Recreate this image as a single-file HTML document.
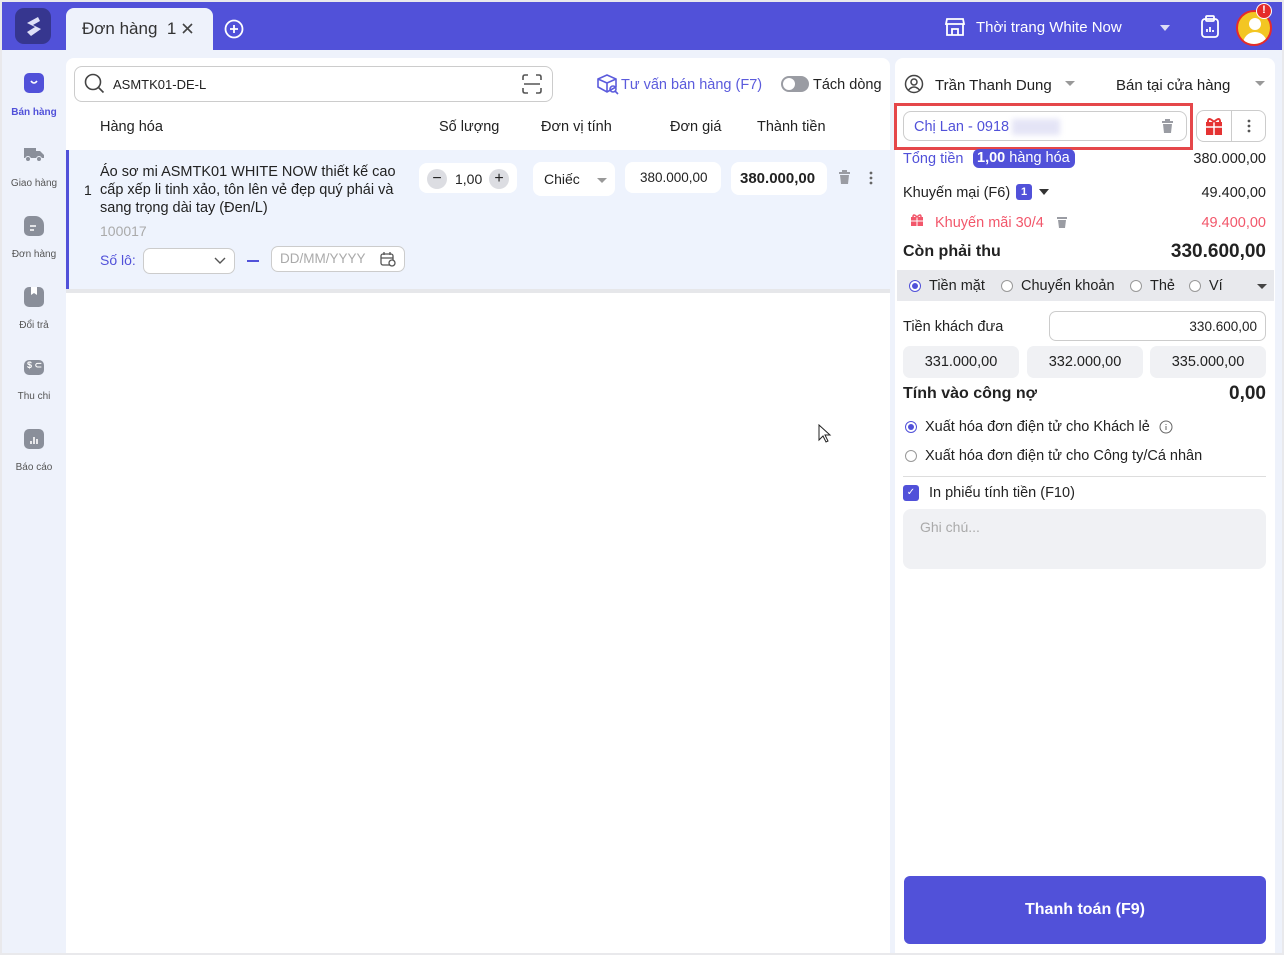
<!DOCTYPE html>
<html><head><meta charset="utf-8"><style>
*{box-sizing:border-box;margin:0;padding:0}
body{width:1284px;height:955px;overflow:hidden;background:#e9e9ec;font-family:"Liberation Sans",sans-serif;font-size:14px;color:#222;position:relative}
.abs{position:absolute}
#frame{left:2px;top:2px;width:1280px;height:951px;background:#eef2fb}
#top{left:2px;top:2px;width:1280px;height:48px;background:#5151d9}
.t{position:absolute;white-space:nowrap}
.r{position:absolute;white-space:nowrap;right:18px;text-align:right}
.side .lbl{position:absolute;width:64px;text-align:center;font-size:10px;color:#555}
.ic{position:absolute;left:24px;width:20px;height:20px;border-radius:5px;background:#8a8f9a}
.box{position:absolute;background:#fff;border-radius:8px}
.radio{position:absolute;width:12px;height:12px;border:1px solid #999;border-radius:50%;background:#fff}
.radio.on{border-color:#5151d9}
.radio.on:after{content:"";position:absolute;left:2px;top:2px;width:6px;height:6px;border-radius:50%;background:#5151d9}
</style></head><body>
<div id="frame" class="abs"></div>
<div id="top" class="abs"></div>
<div class="abs" style="left:15px;top:8px;width:36px;height:36px;border-radius:9px;background:#36368f"></div>
<svg class="abs" style="left:15px;top:8px" width="36" height="36"><path d="M23 9 L12 15 L20 19 L12 24 L16 28 L26 21 L18 17 L25 13Z" fill="#dfe0f7"/></svg>
<div class="abs" style="left:66px;top:8px;width:147px;height:42px;background:#eef2fb;border-radius:8px 8px 0 0"></div>
<div class="t" style="left:82px;top:19px;font-size:17px;color:#333">Đơn hàng&nbsp;&nbsp;1</div>
<svg class="abs" style="left:182px;top:23px" width="11" height="11"><path d="M1 1l9 9M10 1l-9 9" stroke="#444" stroke-width="1.6"/></svg>
<svg class="abs" style="left:224px;top:19px" width="20" height="20" fill="none" stroke="#fff" stroke-width="1.8"><circle cx="10" cy="10" r="8.5"/><path d="M10 6v8M6 10h8"/></svg>
<svg class="abs" style="left:944px;top:16px" width="22" height="22" fill="none" stroke="#fff" stroke-width="1.8"><path d="M3 3h16l1 5H2z M3 8v11h16V8 M8 19v-6h6v6"/></svg>
<div class="t" style="left:976px;top:19px;font-size:15px;color:#fff">Thời trang White Now</div>
<div class="abs" style="left:1160px;top:25px;border:5px solid transparent;border-top:6px solid #dcdcf5"></div>
<svg class="abs" style="left:1200px;top:15px" width="20" height="24" fill="none" stroke="#fff" stroke-width="1.8"><rect x="2" y="4" width="16" height="18" rx="3"/><rect x="6" y="1" width="8" height="5" rx="1"/><path d="M7 17v-3M10 17v-5M13 17v-2"/></svg>
<div class="abs" style="left:1236px;top:10px;width:36px;height:36px;border-radius:50%;background:#f3c623;border:2px solid #e52b2b;overflow:hidden"><div class="abs" style="left:11px;top:6px;width:12px;height:12px;border-radius:50%;background:#fff"></div><div class="abs" style="left:5px;top:20px;width:24px;height:18px;border-radius:12px 12px 0 0;background:#fff"></div></div>
<div class="abs" style="left:1256px;top:3px;width:16px;height:16px;border-radius:50%;background:#e52b2b;border:1.5px solid #fff;color:#fff;font-size:11px;font-weight:bold;text-align:center;line-height:13px">!</div>
<div class="side">
<div class="ic" style="top:73px;background:#5151d9"></div><svg class="abs" style="left:24px;top:73px" width="20" height="20"><path d="M7 8q3 4 6 0" stroke="#fff" stroke-width="1.6" fill="none"/></svg>
<div class="lbl" style="left:2px;top:107px;color:#5151d9;font-weight:bold">Bán hàng</div>
<svg class="abs" style="left:23px;top:145px" width="22" height="18"><path d="M1 3h12v10H1z M13 6h4l4 4v3h-8z" fill="#8a8f9a"/><circle cx="5" cy="14" r="2.5" fill="#8a8f9a" stroke="#eef2fb"/><circle cx="16" cy="14" r="2.5" fill="#8a8f9a" stroke="#eef2fb"/></svg>
<div class="lbl" style="left:2px;top:178px">Giao hàng</div>
<div class="ic" style="top:216px;border-radius:5px 9px 5px 5px"></div><svg class="abs" style="left:24px;top:216px" width="20" height="20"><path d="M6 10h6M6 14h4" stroke="#fff" stroke-width="1.5"/></svg>
<div class="lbl" style="left:2px;top:249px">Đơn hàng</div>
<div class="ic" style="top:287px"></div><svg class="abs" style="left:24px;top:287px" width="20" height="20"><path d="M7 0v8l3-2 3 2V0" fill="#fff"/></svg>
<div class="lbl" style="left:2px;top:320px">Đổi trả</div>
<div class="ic" style="top:360px;height:15px"></div><div class="t" style="left:27px;top:360px;font-size:9px;color:#fff;font-weight:bold">$ ⊂</div>
<div class="lbl" style="left:2px;top:391px">Thu chi</div>
<div class="ic" style="top:429px"></div><svg class="abs" style="left:24px;top:429px" width="20" height="20"><path d="M7 15v-3M10 15v-7M13 15v-5" stroke="#fff" stroke-width="1.6"/></svg>
<div class="lbl" style="left:2px;top:462px">Báo cáo</div>
</div>
<div class="abs" style="left:66px;top:58px;width:824px;height:895px;background:#fff;border-radius:8px 8px 0 0"></div>
<div class="abs" style="left:74px;top:66px;width:479px;height:36px;border:1px solid #ccc;border-radius:8px"></div>
<svg class="abs" style="left:84px;top:73px" width="22" height="22" fill="none" stroke="#444" stroke-width="1.6"><circle cx="9" cy="9" r="7.5"/><path d="M14.5 14.5l5 5"/></svg>
<div class="t" style="left:113px;top:77px;font-size:13px;color:#222">ASMTK01-DE-L</div>
<svg class="abs" style="left:522px;top:74px" width="20" height="20" fill="none" stroke="#555" stroke-width="1.6"><path d="M1 6V3q0-2 2-2h3M14 1h3q2 0 2 2v3M19 14v3q0 2-2 2h-3M6 19H3q-2 0-2-2v-3M2 10h16"/></svg>
<svg class="abs" style="left:596px;top:73px" width="24" height="22" fill="none" stroke="#5b5bdc" stroke-width="1.6"><path d="M2 6l9-4 9 4v8l-9 5-9-5z M2 6l9 4 9-4 M11 10v9"/><circle cx="17" cy="16" r="3"/><path d="M19 18l3 3"/></svg>
<div class="t" style="left:621px;top:77px;font-size:14.5px;color:#5b5bdc">Tư vấn bán hàng (F7)</div>
<div class="abs" style="left:781px;top:76px;width:28px;height:16px;border-radius:8px;background:#9a9ca3"></div><div class="abs" style="left:783px;top:78px;width:12px;height:12px;border-radius:50%;background:#fff"></div>
<div class="t" style="left:813px;top:77px;font-size:14.5px;color:#222">Tách dòng</div>
<div class="t" style="left:100px;top:119px;font-size:14.5px">Hàng hóa</div>
<div class="t" style="left:439px;top:119px;font-size:14.5px">Số lượng</div>
<div class="t" style="left:541px;top:119px;font-size:14.5px">Đơn vị tính</div>
<div class="t" style="left:670px;top:119px;font-size:14.5px">Đơn giá</div>
<div class="t" style="left:757px;top:119px;font-size:14.5px">Thành tiền</div>
<div class="abs" style="left:66px;top:150px;width:824px;height:139px;background:#eef3fd;border-left:3px solid #5151d9"></div>
<div class="abs" style="left:66px;top:289px;width:824px;height:4px;background:#e6e7ea"></div>
<div class="t" style="left:84px;top:182px;font-size:14px">1</div>
<div class="t" style="left:100px;top:163px;font-size:14.5px;line-height:18px;white-space:normal;width:312px">Áo sơ mi ASMTK01 WHITE NOW thiết kế cao cấp xếp li tinh xảo, tôn lên vẻ đẹp quý phái và sang trọng dài tay (Đen/L)</div>
<div class="t" style="left:100px;top:223px;font-size:14px;color:#aaa">100017</div>
<div class="t" style="left:100px;top:252px;font-size:14px;color:#5151d9">Số lô:</div>
<div class="abs" style="left:143px;top:248px;width:92px;height:26px;border:1px solid #ccc;border-radius:7px;background:#fff"></div>
<svg class="abs" style="left:214px;top:256px" width="12" height="10"><path d="M1 2l5 5 5-5" stroke="#555" stroke-width="1.4" fill="none"/></svg>
<div class="abs" style="left:247px;top:260px;width:12px;height:2px;background:#5151d9"></div>
<div class="abs" style="left:271px;top:246px;width:134px;height:26px;border:1px solid #ccc;border-radius:7px;background:#fff"></div>
<div class="t" style="left:280px;top:251px;font-size:13.5px;color:#aaa">DD/MM/YYYY</div>
<svg class="abs" style="left:380px;top:251px" width="16" height="16" fill="none" stroke="#555" stroke-width="1.3"><rect x="1" y="3" width="12" height="11" rx="2"/><path d="M1 7h12M4 1v3M10 1v3"/><circle cx="12" cy="12" r="3" fill="#fff"/></svg>
<div class="box" style="left:419px;top:163px;width:98px;height:30px"></div>
<div class="abs" style="left:427px;top:169px;width:20px;height:20px;border-radius:50%;background:#dcdde2;text-align:center;font-size:16px;line-height:19px">−</div>
<div class="t" style="left:455px;top:171px;font-size:14px">1,00</div>
<div class="abs" style="left:489px;top:169px;width:20px;height:20px;border-radius:50%;background:#dcdde2;text-align:center;font-size:16px;line-height:19px">+</div>
<div class="box" style="left:533px;top:162px;width:82px;height:34px"></div>
<div class="t" style="left:544px;top:171px;font-size:14px">Chiếc</div>
<div class="abs" style="left:597px;top:178px;border:5px solid transparent;border-top:5px solid #999"></div>
<div class="box" style="left:625px;top:162px;width:96px;height:31px"></div>
<div class="t" style="left:640px;top:170px;font-size:13.5px">380.000,00</div>
<div class="box" style="left:731px;top:162px;width:96px;height:33px;overflow:hidden"><div class="t" style="left:9px;top:8px;font-size:15px;font-weight:bold">380.000,00</div></div>
<svg class="abs" style="left:838px;top:170px" width="13" height="14"><rect x="1" y="2" width="11" height="2" fill="#9a9ca3"/><rect x="4" y="0" width="5" height="2" fill="#9a9ca3"/><path d="M2 5h9l-1 9H3z" fill="#9a9ca3"/></svg>
<svg class="abs" style="left:868px;top:170px" width="6" height="16"><circle cx="3" cy="3" r="1.4" fill="#666"/><circle cx="3" cy="8" r="1.4" fill="#666"/><circle cx="3" cy="13" r="1.4" fill="#666"/></svg>
<svg class="abs" style="left:818px;top:424px" width="14" height="20"><path d="M1 1v15l4-4 3 6 2-1-3-6h5z" fill="#fff" stroke="#222"/></svg>
<div class="abs" style="left:895px;top:58px;width:380px;height:895px;background:#fff;border-radius:8px 8px 0 0"></div>
<svg class="abs" style="left:904px;top:74px" width="20" height="20" fill="none" stroke="#444" stroke-width="1.5"><circle cx="10" cy="10" r="8.5"/><circle cx="10" cy="8" r="3"/><path d="M4.5 16q5.5-6 11 0"/></svg>
<div class="t" style="left:935px;top:77px;font-size:15px">Trần Thanh Dung</div>
<div class="abs" style="left:1065px;top:81px;border:5px solid transparent;border-top:5px solid #999"></div>
<div class="t" style="left:1116px;top:77px;font-size:15px">Bán tại cửa hàng</div>
<div class="abs" style="left:1255px;top:81px;border:5px solid transparent;border-top:5px solid #999"></div>
<div class="abs" style="left:894px;top:103px;width:299px;height:47px;border:3px solid #e5474a"></div>
<div class="abs" style="left:903px;top:111px;width:284px;height:30px;border:1px solid #ccc;border-radius:8px"></div>
<div class="t" style="left:914px;top:119px;font-size:14.5px;color:#5151d9">Chị Lan - 0918</div>
<div class="abs" style="left:1012px;top:119px;width:48px;height:16px;background:#e4e4f6;filter:blur(3px)"></div>
<svg class="abs" style="left:1161px;top:119px" width="13" height="14"><rect x="1" y="2" width="11" height="2" fill="#9a9ca3"/><rect x="4" y="0" width="5" height="2" fill="#9a9ca3"/><path d="M2 5h9l-1 9H3z" fill="#9a9ca3"/></svg>
<div class="abs" style="left:1196px;top:110px;width:70px;height:32px;border:1px solid #ccc;border-radius:8px"></div>
<div class="abs" style="left:1231px;top:110px;width:1px;height:32px;background:#ccc"></div>
<svg class="abs" style="left:1204px;top:116px" width="20" height="20"><rect x="2" y="6" width="16" height="13" fill="#e53333"/><path d="M10 6v13M2 11h16" stroke="#fff" stroke-width="1.5"/><path d="M10 6q-6-6-6 0M10 6q6-6 6 0" stroke="#e53333" stroke-width="2" fill="none"/></svg>
<svg class="abs" style="left:1246px;top:118px" width="6" height="16"><circle cx="3" cy="3" r="1.4" fill="#555"/><circle cx="3" cy="8" r="1.4" fill="#555"/><circle cx="3" cy="13" r="1.4" fill="#555"/></svg>
<div class="t" style="left:903px;top:151px;font-size:14.5px;color:#5151d9">Tổng tiền</div>
<div class="abs" style="left:973px;top:149px;width:102px;height:19px;border-radius:6px;background:#5151d9"></div>
<div class="t" style="left:977px;top:150px;font-size:14.5px;color:#fff"><b>1,00</b> hàng hóa</div>
<div class="r" style="top:151px;font-size:14.5px">380.000,00</div>
<div class="t" style="left:903px;top:185px;font-size:14.5px">Khuyến mại (F6)</div>
<div class="abs" style="left:1016px;top:184px;width:16px;height:16px;border-radius:3px;background:#5151d9;color:#fff;font-size:11px;font-weight:bold;text-align:center;line-height:16px">1</div>
<div class="abs" style="left:1039px;top:189px;border:5px solid transparent;border-top:6px solid #333"></div>
<div class="r" style="top:185px;font-size:14.5px">49.400,00</div>
<svg class="abs" style="left:910px;top:213px" width="14" height="14"><rect x="1" y="4" width="12" height="9" fill="#f2576b"/><path d="M7 4v9M1 8h12" stroke="#fff"/><path d="M7 4q-4-4-4 0M7 4q4-4 4 0" stroke="#f2576b" stroke-width="1.5" fill="none"/></svg>
<div class="t" style="left:935px;top:215px;font-size:14.5px;color:#f2576b">Khuyến mãi 30/4</div>
<svg class="abs" style="left:1056px;top:215px" width="12" height="13"><rect x="1" y="2" width="10" height="2" fill="#9a9ca3"/><path d="M2 5h8l-1 8H3z" fill="#9a9ca3"/></svg>
<div class="r" style="top:215px;font-size:14.5px;color:#f2576b">49.400,00</div>
<div class="t" style="left:903px;top:243px;font-size:16px;font-weight:bold">Còn phải thu</div>
<div class="r" style="top:241px;font-size:19px;font-weight:bold">330.600,00</div>
<div class="abs" style="left:897px;top:270px;width:377px;height:31px;background:#e8e9ed"></div>
<div class="radio on" style="left:909px;top:280px"></div><div class="t" style="left:929px;top:278px;font-size:14.5px">Tiền mặt</div>
<div class="radio" style="left:1001px;top:280px"></div><div class="t" style="left:1021px;top:278px;font-size:14.5px">Chuyển khoản</div>
<div class="radio" style="left:1130px;top:280px"></div><div class="t" style="left:1150px;top:278px;font-size:14.5px">Thẻ</div>
<div class="radio" style="left:1189px;top:280px"></div><div class="t" style="left:1209px;top:278px;font-size:14.5px">Ví</div>
<div class="abs" style="left:1257px;top:284px;border:5px solid transparent;border-top:5px solid #444"></div>
<div class="t" style="left:903px;top:319px;font-size:14.5px">Tiền khách đưa</div>
<div class="abs" style="left:1049px;top:311px;width:217px;height:30px;border:1px solid #ccc;border-radius:7px"></div>
<div class="r" style="right:27px;top:319px;font-size:13.5px">330.600,00</div>
<div class="abs" style="left:903px;top:346px;width:116px;height:32px;border-radius:7px;background:#f0f1f4;text-align:center;line-height:32px;font-size:14.5px">331.000,00</div>
<div class="abs" style="left:1027px;top:346px;width:116px;height:32px;border-radius:7px;background:#f0f1f4;text-align:center;line-height:32px;font-size:14.5px">332.000,00</div>
<div class="abs" style="left:1150px;top:346px;width:116px;height:32px;border-radius:7px;background:#f0f1f4;text-align:center;line-height:32px;font-size:14.5px">335.000,00</div>
<div class="t" style="left:903px;top:385px;font-size:16px;font-weight:bold">Tính vào công nợ</div>
<div class="r" style="top:383px;font-size:19px;font-weight:bold">0,00</div>
<div class="radio on" style="left:905px;top:421px"></div><div class="t" style="left:925px;top:419px;font-size:14.5px">Xuất hóa đơn điện tử cho Khách lẻ</div>
<svg class="abs" style="left:1159px;top:420px" width="14" height="14" fill="none" stroke="#666"><circle cx="7" cy="7" r="6"/><path d="M7 6v4M7 4v1"/></svg>
<div class="radio" style="left:905px;top:450px"></div><div class="t" style="left:925px;top:448px;font-size:14.5px">Xuất hóa đơn điện tử cho Công ty/Cá nhân</div>
<div class="abs" style="left:903px;top:476px;width:363px;height:1px;background:#ddd"></div>
<div class="abs" style="left:903px;top:485px;width:16px;height:16px;border-radius:3px;background:#5151d9;color:#fff;font-size:10px;text-align:center;line-height:16px">✓</div>
<div class="t" style="left:929px;top:485px;font-size:14.5px">In phiếu tính tiền (F10)</div>
<div class="abs" style="left:903px;top:509px;width:363px;height:60px;border-radius:8px;background:#f0f1f4"></div>
<div class="t" style="left:920px;top:519px;font-size:14px;color:#aaa">Ghi chú...</div>
<div class="abs" style="left:904px;top:876px;width:362px;height:68px;border-radius:6px;background:#5151d9"></div>
<div class="t" style="left:904px;top:901px;width:362px;text-align:center;font-size:16px;font-weight:bold;color:#fff">Thanh toán (F9)</div>
</body></html>
